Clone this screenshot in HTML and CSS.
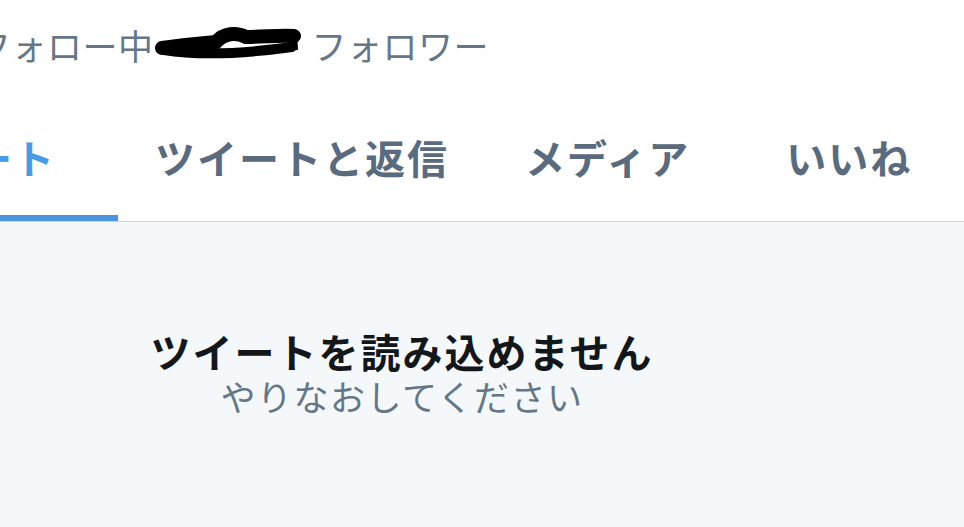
FILE: index.html
```html
<!DOCTYPE html>
<html lang="ja">
<head>
<meta charset="utf-8">
<link rel="stylesheet" href="styles.css">
</head>
<body>
<div class="page">
  <div class="stats">
    <span class="stat">フォロー中</span>
    <span class="redact"><svg width="150" height="40" viewBox="0 0 150 40"><path d="M8 24 C30 21 50 19 62 18 C70 9 82 8 92 13 C110 13 125 11 140 12" fill="none" stroke="#000" stroke-width="14" stroke-linecap="round"/><path d="M10 26 C40 31 80 31 138 23" fill="none" stroke="#000" stroke-width="10" stroke-linecap="round"/><path d="M138 6 L143 6 L144 26 L138 26 Z" fill="#000"/></svg></span>
    <span class="stat">フォロワー</span>
  </div>
  <nav class="tabs">
    <div class="tab tab-tweets active">ツイート</div>
    <div class="tab tab-replies">ツイートと返信</div>
    <div class="tab tab-media">メディア</div>
    <div class="tab tab-likes">いいね</div>
  </nav>
  <main class="content">
    <div class="message">
      <div class="title">ツイートを読み込めません</div>
      <div class="subtitle">やりなおしてください</div>
    </div>
  </main>
</div>
</body>
</html>
```
FILE: styles.css
```css
html, body {
  margin: 0;
  padding: 0;
  background: #ffffff;
  overflow: hidden;
}
body {
  font-family: "Noto Sans CJK JP", "Noto Sans", sans-serif;
  width: 964px;
  height: 527px;
}
.page {
  display: flex;
  flex-direction: column;
  height: 527px;
}
.stats {
  display: flex;
  align-items: center;
  height: 88px;
  margin-left: -24px;
  color: #657786;
  font-size: 35px;
  white-space: nowrap;
}
.stat {
  letter-spacing: 0.5px;
}
.redact {
  display: flex;
  margin: 0 8px 0 0;
}
.tabs {
  display: flex;
  height: 133px;
  border-bottom: 1px solid #ccd6dd;
  margin-left: -174px;
  white-space: nowrap;
}
.tab {
  display: flex;
  align-items: center;
  font-size: 40px;
  font-weight: 700;
  color: #5b6b7e;
  letter-spacing: 2px;
  box-sizing: border-box;
  padding-top: 4px;
}
.tab.active {
  color: #4a9be6;
  border-bottom: 6px solid #4a94de;
  padding-top: 10px;
}
.tab-tweets {
  width: 292px;
  justify-content: center;
}
.tab-replies {
  padding-left: 37px;
}
.tab-media {
  padding-left: 76px;
}
.tab-likes {
  padding-left: 96px;
}
.content {
  flex: 1;
  background: #f5f8fa;
}
.message {
  display: flex;
  flex-direction: column;
  align-items: center;
  width: 504px;
  margin-left: 150px;
  padding-top: 106px;
}
.title {
  font-size: 40px;
  font-weight: 700;
  color: #14171a;
  letter-spacing: 2px;
  line-height: 46px;
}
.subtitle {
  font-size: 35px;
  color: #657786;
  letter-spacing: 1.5px;
  line-height: 44px;
}
```
